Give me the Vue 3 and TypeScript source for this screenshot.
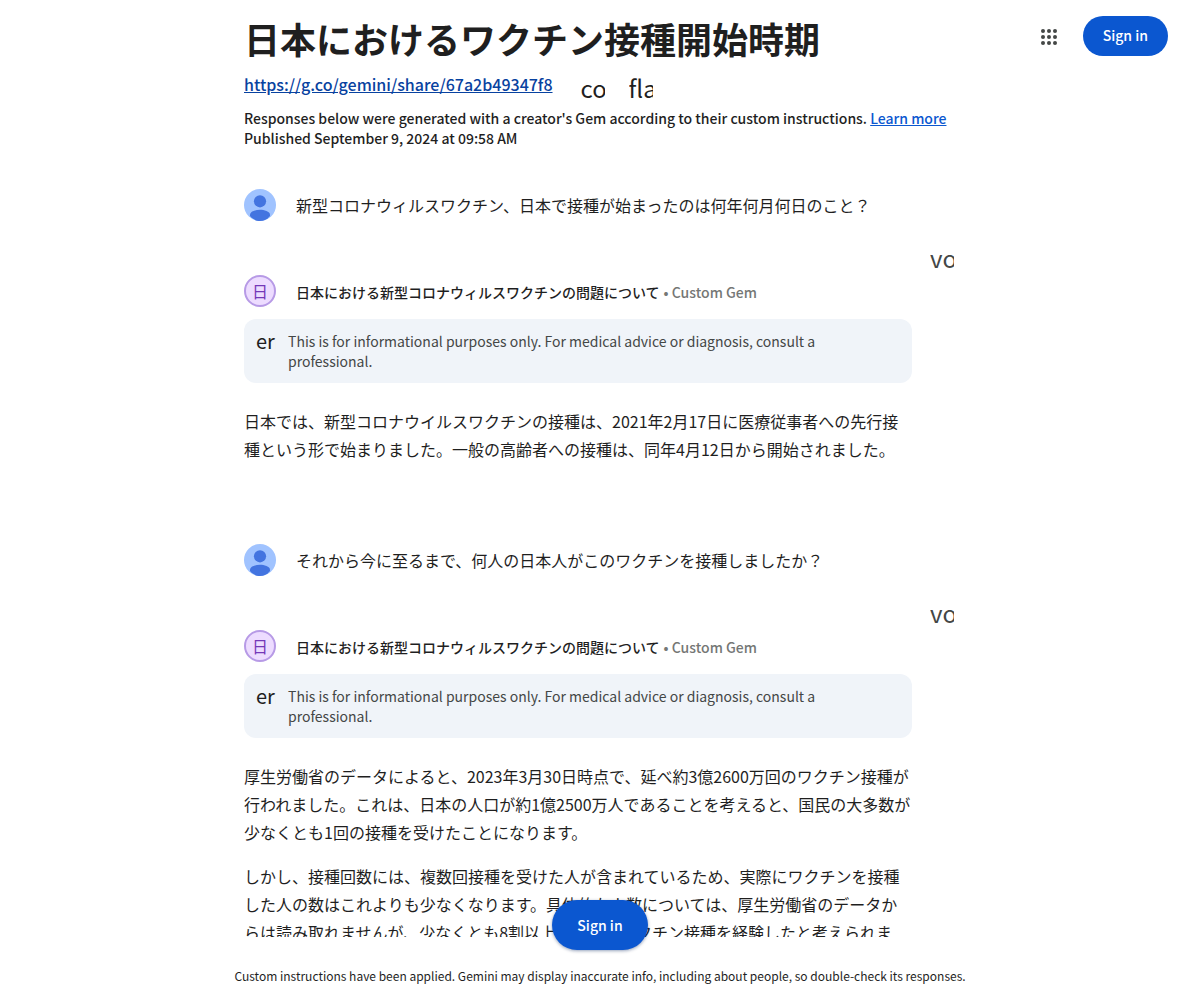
<script setup lang="ts">
interface Turn {
  id: number
  question: string
  answer: string[]
}

const title = '日本におけるワクチン接種開始時期'
const shareUrl = 'https://g.co/gemini/share/67a2b49347f8'
const gemName = '日本における新型コロナウィルスワクチンの問題について'
const disclaimer =
  'This is for informational purposes only. For medical advice or diagnosis, consult a professional.'

const turns: Turn[] = [
  {
    id: 1,
    question: '新型コロナウィルスワクチン、日本で接種が始まったのは何年何月何日のこと？',
    answer: [
      '日本では、新型コロナウイルスワクチンの接種は、2021年2月17日に医療従事者への先行接種という形で始まりました。一般の高齢者への接種は、同年4月12日から開始されました。',
    ],
  },
  {
    id: 2,
    question: 'それから今に至るまで、何人の日本人がこのワクチンを接種しましたか？',
    answer: [
      '厚生労働省のデータによると、2023年3月30日時点で、延べ約3億2600万回のワクチン接種が行われました。これは、日本の人口が約1億2500万人であることを考えると、国民の大多数が少なくとも1回の接種を受けたことになります。',
      'しかし、接種回数には、複数回接種を受けた人が含まれているため、実際にワクチンを接種した人の数はこれよりも少なくなります。具体的な人数については、厚生労働省のデータからは読み取れませんが、少なくとも8割以上の国民がワクチン接種を経験したと考えられます。',
    ],
  },
]

const dots = [7, 13, 19].flatMap((y) => [6, 12, 18].map((x) => ({ x, y })))
</script>

<template>
  <div class="page">
    <div class="account">
      <button class="apps" type="button" aria-label="Google apps">
        <svg width="24" height="24" viewBox="0 0 24 24" aria-hidden="true">
          <circle v-for="d in dots" :key="`${d.x}-${d.y}`" :cx="d.x" :cy="d.y" r="2" fill="#444746" />
        </svg>
      </button>
      <button class="sign-in" type="button">Sign in</button>
    </div>

    <main class="scroller">
      <div class="column">
        <header class="intro">
          <h1>{{ title }}</h1>
          <div class="share">
            <a class="share-link" href="#">{{ shareUrl }}</a>
            <button class="ligature" type="button">content_copy</button>
            <button class="ligature" type="button">flag</button>
          </div>
          <p class="note">
            Responses below were generated with a creator's Gem according to their custom instructions.
            <a class="learn" href="#">Learn more</a>
          </p>
          <p class="note">Published September 9, 2024 at 09:58 AM</p>
        </header>

        <section v-for="turn in turns" :key="turn.id" class="turn">
          <div class="query">
            <svg class="avatar" viewBox="0 0 32 32" aria-hidden="true">
              <circle cx="16" cy="16" r="16" fill="#a0c3ff" />
              <circle cx="16" cy="12.3" r="6.1" fill="#4374e0" />
              <path d="M6 27v-1.200c0-3.500 6-5 10-5s10 1.500 10 5v1.200C23.300 30.200 19.800 32 16 32S8.700 30.200 6 27z" fill="#4374e0" />
            </svg>
            <h2>{{ turn.question }}</h2>
          </div>
          <div class="voice">
            <button class="ligature muted" type="button">volume_up</button>
          </div>
          <div class="gem">
            <span class="gem-badge">日</span>
            <p class="gem-name">{{ gemName }}<span>• Custom Gem</span></p>
          </div>
          <div class="response">
            <div class="disclaimer">
              <span class="ligature small">error</span>
              <p>{{ disclaimer }}</p>
            </div>
            <div class="answer">
              <p v-for="(text, i) in turn.answer" :key="i">{{ text }}</p>
            </div>
          </div>
        </section>
      </div>
    </main>

    <footer class="footer">
      <button class="sign-in floating" type="button">Sign in</button>
      <p>
        Custom instructions have been applied. Gemini may display inaccurate info, including about people, so
        double-check its responses.
      </p>
    </footer>
  </div>
</template>

<style>
body {
  margin: 0;
  background: #fff;
}
</style>

<style scoped>
.page {
  position: relative;
  display: flex;
  flex-direction: column;
  height: 100vh;
  box-sizing: border-box;
  overflow: hidden;
  font-family: "Noto Sans CJK JP", sans-serif;
  color: #1f1f1f;
}

h1,
h2,
p {
  margin: 0;
}

button {
  padding: 0;
  border: 0;
  background: none;
  font-family: inherit;
  color: inherit;
  cursor: pointer;
}

.account {
  position: absolute;
  top: 16px;
  right: 32px;
  z-index: 1;
  display: flex;
  align-items: center;
  gap: 22px;
}

.apps,
.apps svg {
  display: block;
}

.sign-in {
  height: 40px;
  padding: 0 20px 2px;
  border-radius: 100px;
  background: #0b57d0;
  color: #fff;
  font-size: 14px;
  font-weight: 500;
  line-height: 20px;
}

.scroller {
  flex: 1;
  min-height: 0;
  overflow: hidden;
}

.column {
  max-width: 712px;
  margin: 0 auto;
  padding-top: 16px;
}

h1 {
  font-size: 36px;
  font-weight: 700;
  line-height: 44px;
}

.share {
  display: flex;
  align-items: flex-start;
  gap: 24px;
  padding: 12px 0 8px;
}

.share-link {
  margin-right: 4px;
  color: #0842a0;
  font-size: 16px;
  font-weight: 500;
  line-height: 24px;
}

.ligature {
  width: 24px;
  height: 24px;
  overflow: hidden;
  font-size: 24px;
  line-height: 24px;
  text-align: left;
  white-space: nowrap;
}

.share .ligature {
  margin-top: 4px;
}

.note {
  font-size: 14px;
  font-weight: 500;
  line-height: 20px;
}

.learn {
  color: #0b57d0;
}

.intro {
  margin-bottom: 41px;
}

.turn {
  margin-bottom: 81px;
}

.query {
  display: flex;
  gap: 20px;
}

.avatar {
  flex: none;
  width: 32px;
  height: 32px;
}

.query h2 {
  font-size: 16px;
  font-weight: 400;
  line-height: 32px;
}

.voice {
  display: flex;
  justify-content: flex-end;
  padding: 25px 2px 5px 0;
}

.muted {
  color: #444746;
}

.gem {
  display: flex;
  align-items: center;
  gap: 20px;
}

.gem-badge {
  flex: none;
  box-sizing: border-box;
  width: 32px;
  height: 32px;
  border: 2px solid #b79ae6;
  border-radius: 50%;
  background: #eddcff;
  color: #7438b8;
  font-size: 16px;
  line-height: 28px;
  text-align: center;
}

.gem-name {
  padding-top: 2px;
  font-size: 14px;
  font-weight: 500;
  line-height: 20px;
}

.gem-name span {
  margin-left: 4px;
  color: #757775;
}

.response {
  margin: 12px 44px 0 0;
}

.disclaimer {
  display: flex;
  gap: 12px;
  padding: 12px;
  border-radius: 12px;
  background: #f0f4f9;
}

.disclaimer p {
  max-width: 560px;
  color: #444746;
  font-size: 14px;
  line-height: 20px;
}

.small {
  flex: none;
  width: 20px;
  height: 20px;
  font-size: 20px;
  line-height: 20px;
}

.answer {
  display: flex;
  flex-direction: column;
  gap: 16px;
  margin-top: 24px;
}

.answer p {
  font-size: 16px;
  line-height: 28px;
}

.footer {
  position: relative;
  padding: 29px 16px 15px;
  text-align: center;
}

.footer p {
  font-size: 12px;
  line-height: 19px;
  color: #1f1f1f;
}

.floating {
  position: absolute;
  bottom: 50px;
  left: 50%;
  width: 96px;
  height: 50px;
  padding: 0;
  transform: translateX(-50%);
  box-shadow: 0 1px 3px rgba(11, 50, 120, 0.35), 0 1px 4px rgba(0, 0, 0, 0.1);
}
</style>
